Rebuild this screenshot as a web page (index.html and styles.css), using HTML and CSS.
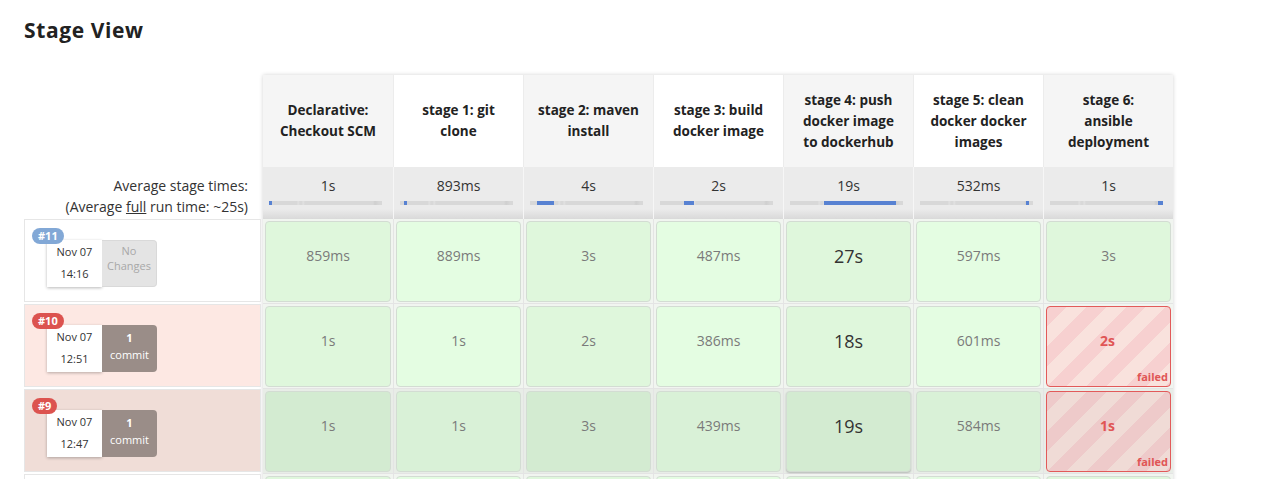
FILE: index.html
```html
<!DOCTYPE html>
<html>
<head>
<meta charset="utf-8">
<title>Stage View</title>
<link rel="stylesheet" href="styles.css">
</head>
<body>
<div class="page">
  <h2 class="title">Stage View</h2>
  <div class="stage-view">
    <div class="labels">
      <div class="labels-head"></div>
      <div class="avg-label">Average stage times:<br>(Average <span class="u">full</span> run time: ~25s)</div>
      <div class="build build-ok">
        <span class="badge badge-blue">#11</span>
        <div class="build-info">
          <div class="date">Nov 07<br>14:16</div>
          <div class="changes changes-none">No<br>Changes</div>
        </div>
      </div>
      <div class="build build-failed">
        <span class="badge badge-red">#10</span>
        <div class="build-info">
          <div class="date">Nov 07<br>12:51</div>
          <div class="changes changes-commit"><b>1</b><br>commit</div>
        </div>
      </div>
      <div class="build build-failed build-dark">
        <span class="badge badge-red">#9</span>
        <div class="build-info">
          <div class="date">Nov 07<br>12:47</div>
          <div class="changes changes-commit"><b>1</b><br>commit</div>
        </div>
      </div>
      <div class="build build-ok"></div>
    </div>
    <div class="stages">
      <div class="head-row">
        <div class="head">Declarative:<br>Checkout SCM</div>
        <div class="head">stage 1: git<br>clone</div>
        <div class="head">stage 2: maven<br>install</div>
        <div class="head">stage 3: build<br>docker image</div>
        <div class="head">stage 4: push<br>docker image<br>to dockerhub</div>
        <div class="head">stage 5: clean<br>docker docker<br>images</div>
        <div class="head">stage 6:<br>ansible<br>deployment</div>
      </div>
      <div class="avg-row">
        <div class="avg"><div class="avg-time">1s</div><div class="bar"><div class="bar-fill" style="margin-left:0px;width:3px"></div></div></div>
        <div class="avg"><div class="avg-time">893ms</div><div class="bar"><div class="bar-fill" style="margin-left:4px;width:3px"></div></div></div>
        <div class="avg"><div class="avg-time">4s</div><div class="bar"><div class="bar-fill" style="margin-left:7px;width:17px"></div></div></div>
        <div class="avg"><div class="avg-time">2s</div><div class="bar"><div class="bar-fill" style="margin-left:24px;width:10px"></div></div></div>
        <div class="avg"><div class="avg-time">19s</div><div class="bar"><div class="bar-fill" style="margin-left:34px;width:72px"></div></div></div>
        <div class="avg"><div class="avg-time">532ms</div><div class="bar"><div class="bar-fill" style="margin-left:106px;width:3px"></div></div></div>
        <div class="avg"><div class="avg-time">1s</div><div class="bar"><div class="bar-fill" style="margin-left:108px;width:5px"></div></div></div>
      </div>
      <div class="run-row">
        <div class="td"><div class="cell ok">859ms</div></div>
        <div class="td"><div class="cell ok">889ms</div></div>
        <div class="td"><div class="cell ok">3s</div></div>
        <div class="td"><div class="cell ok">487ms</div></div>
        <div class="td"><div class="cell ok long">27s</div></div>
        <div class="td"><div class="cell ok">597ms</div></div>
        <div class="td"><div class="cell ok">3s</div></div>
      </div>
      <div class="run-row">
        <div class="td"><div class="cell ok">1s</div></div>
        <div class="td"><div class="cell ok">1s</div></div>
        <div class="td"><div class="cell ok">2s</div></div>
        <div class="td"><div class="cell ok">386ms</div></div>
        <div class="td"><div class="cell ok long">18s</div></div>
        <div class="td"><div class="cell ok">601ms</div></div>
        <div class="td"><div class="cell failed"><span class="ftime">2s</span><span class="status">failed</span></div></div>
      </div>
      <div class="run-row run-dark">
        <div class="td"><div class="cell ok">1s</div></div>
        <div class="td"><div class="cell ok">1s</div></div>
        <div class="td"><div class="cell ok">3s</div></div>
        <div class="td"><div class="cell ok">439ms</div></div>
        <div class="td"><div class="cell ok long raised">19s</div></div>
        <div class="td"><div class="cell ok">584ms</div></div>
        <div class="td"><div class="cell failed"><span class="ftime">1s</span><span class="status">failed</span></div></div>
      </div>
      <div class="run-row">
        <div class="td"><div class="cell ok"></div></div>
        <div class="td"><div class="cell ok"></div></div>
        <div class="td"><div class="cell ok"></div></div>
        <div class="td"><div class="cell ok"></div></div>
        <div class="td"><div class="cell ok"></div></div>
        <div class="td"><div class="cell ok"></div></div>
        <div class="td"><div class="cell ok"></div></div>
      </div>
    </div>
  </div>
</div>
</body>
</html>
```
FILE: styles.css
```css
* { box-sizing: border-box; }
html, body { margin: 0; padding: 0; overflow: hidden; background: #fff; }
body { font-family: "Open Sans", "Noto Sans", sans-serif; color: #333; }

.page { padding: 16px 24px 0; }
.title {
  margin: 0;
  font-size: 21px;
  line-height: 28px;
  font-weight: 700;
  color: #222;
  letter-spacing: 0.6px;
}

.stage-view { display: flex; margin-top: 30px; }

/* left label column */
.labels { width: 237px; margin-right: 2px; flex: none; }
.labels-head { height: 93px; }
.avg-label {
  height: 52px;
  padding: 8px 13px 0 0;
  text-align: right;
  font-size: 14px;
  line-height: 21px;
  color: #333;
}
.u { text-decoration: underline; }

.build {
  position: relative;
  height: 83px;
  margin-bottom: 2px;
  border: 1px solid #e6e6e6;
  padding: 20px 0 0 22px;
}
.build-ok { background: #fff; }
.build-failed { background: #fde8e3; }
.build-failed.build-dark { background: #f0ddd7; }

.badge {
  position: absolute;
  left: 7px;
  top: 8px;
  z-index: 1;
  height: 16px;
  line-height: 16px;
  padding: 0 6px;
  border-radius: 8px;
  color: #fff;
  font-weight: 700;
  font-size: 11px;
}
.badge-blue { background: #82a8d6; }
.badge-red { background: #dc534f; }

.build-info { display: flex; }
.date {
  width: 55px;
  height: 47px;
  background: #fff;
  box-shadow: 0 1px 3px rgba(0, 0, 0, 0.28);
  font-size: 11px;
  line-height: 22px;
  padding-top: 1px;
  text-align: center;
  color: #333;
}
.changes {
  width: 55px;
  height: 47px;
  border-radius: 0 4px 4px 0;
  font-size: 11px;
  text-align: center;
}
.changes-none {
  background: #e4e4e4;
  color: #a8a8a8;
  border: 1px solid #d9d9d9;
  border-left: 0;
  padding-top: 2px;
  line-height: 15px;
}
.changes-commit {
  background: #9a8d88;
  color: #fff;
  padding-top: 4px;
  line-height: 17px;
}
.changes-commit b { font-weight: 700; }

/* stage table */
.stages {
  width: 910px;
  flex: none;
  margin-top: 1px;
  box-shadow: 0 0 4px rgba(0, 0, 0, 0.18);
}
.head-row, .avg-row, .run-row {
  display: grid;
  grid-template-columns: repeat(7, 130px);
}
.head {
  height: 92px;
  display: flex;
  align-items: center;
  justify-content: center;
  text-align: center;
  font-weight: 700;
  font-size: 13.5px;
  line-height: 21px;
  color: #222;
  background: #fff;
}
.head:nth-child(odd) { background: #f5f5f5; }
.head + .head { border-left: 1px solid #ececec; }

.avg {
  height: 52px;
  padding-top: 9px;
  background: linear-gradient(#ebebeb 0, #ebebeb 42px, #d9d9d9 52px);
}
.avg + .avg { border-left: 1px solid #f6f6f6; }
.avg-time {
  text-align: center;
  font-size: 14px;
  line-height: 20px;
  color: #333;
}
.bar {
  display: flex;
  margin: 5px 0 0 6px;
  width: 113px;
  height: 4px;
  background: linear-gradient(90deg, #d8d8d8 0, #d8d8d8 28px, #e2e2e2 29px, #d8d8d8 31px, #d8d8d8 33px, #e2e2e2 34px, #d8d8d8 36px, #d8d8d8 104px, #cfcfcf 106px, #d8d8d8 110px);
}
.bar-fill { height: 4px; background: #5882d2; }

.td {
  height: 85px;
  padding: 2px 2px 1px;
  border-bottom: 1px solid #e4e4e4;
  background: #f1f5f0;
}
.td + .td { border-left: 1px solid #e4e4e4; }
.run-dark .td { background: #e8ede7; }

.cell {
  height: 100%;
  border: 1px solid #d3dcd3;
  border-radius: 4px;
  text-align: center;
  font-size: 14px;
  line-height: 20px;
  padding-top: 24px;
  color: #7a7a7a;
}
.cell.ok { background: #e4fde2; }
.td:nth-child(odd) .cell.ok { background: #dff7dc; }
.run-dark .cell.ok { background: #d9f1d7; }
.run-dark .td:nth-child(odd) .cell.ok { background: #d3ebd1; }

.cell.long {
  font-size: 18px;
  line-height: 22px;
  padding-top: 23px;
  color: #333;
}
.cell.raised { box-shadow: 0 1px 2px rgba(0, 0, 0, 0.22); }

.cell.failed {
  display: flex;
  flex-direction: column;
  border: 1px solid #e25a5a;
  background: repeating-linear-gradient(135deg, #f7d0d0 0, #f7d0d0 14px, #f9e2dd 14px, #f9e2dd 28px);
  color: #e05555;
  padding: 24px 2px 3px 0;
}
.run-dark .cell.failed {
  background: repeating-linear-gradient(135deg, #eecaca 0, #eecaca 14px, #f0dbd6 14px, #f0dbd6 28px);
}
.ftime { font-weight: 700; font-size: 14px; line-height: 20px; }
.status {
  margin-top: auto;
  text-align: right;
  font-weight: 700;
  font-size: 11px;
  line-height: 13px;
}
```
